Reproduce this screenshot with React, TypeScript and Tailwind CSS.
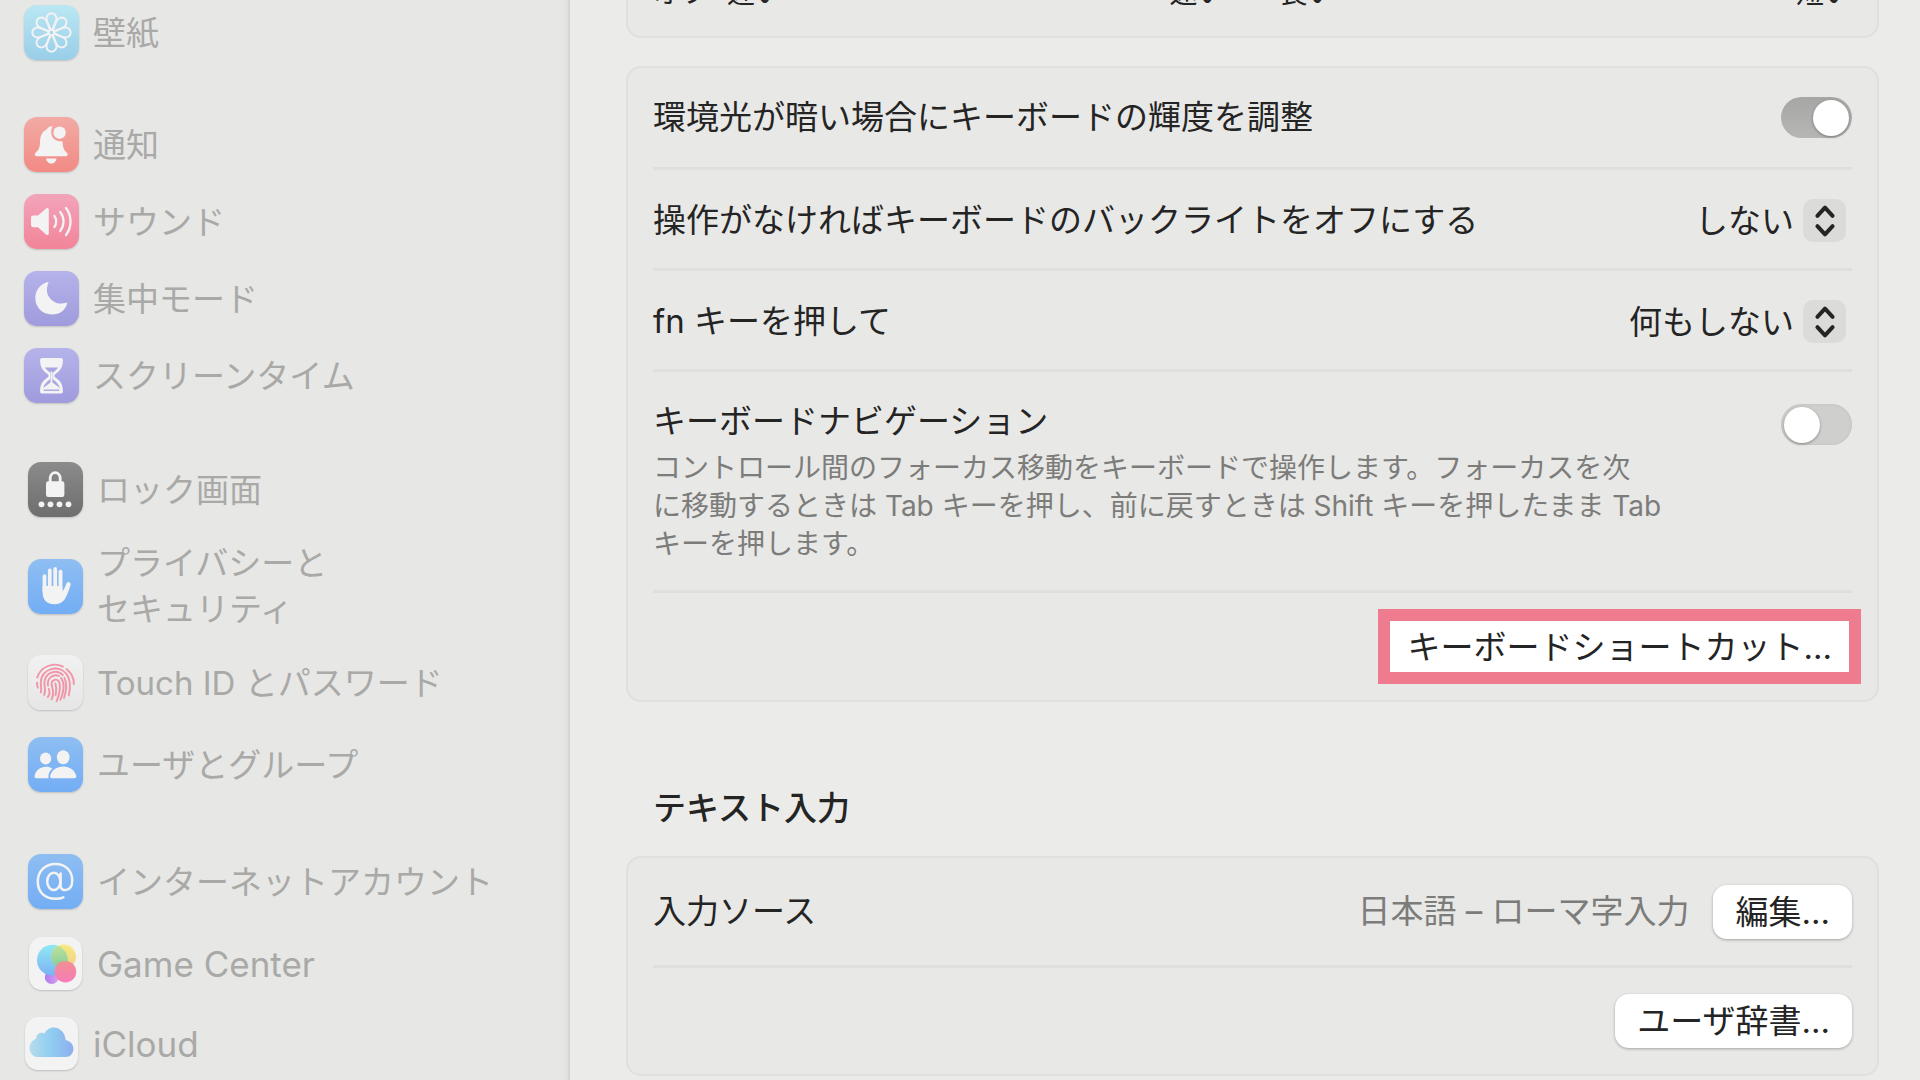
import { useState } from 'react';
import type { ReactNode } from 'react';
import clsx from 'clsx';

const WHITE = '#f3f3f3';

function Glyph({ children }: { children: ReactNode }) {
    return (
        <svg viewBox="0 0 55 55" className="size-full" fill="none" aria-hidden="true">
            {children}
        </svg>
    );
}

function WallpaperIcon() {
    return (
        <Glyph>
            <g transform="translate(27.5 27.5)" stroke={WHITE} strokeWidth="1.9">
                {[0, 45, 90, 135, 180, 225, 270, 315].map((angle) => (
                    <path
                        key={angle}
                        transform={`rotate(${angle})`}
                        d="M-0.8 -2.5C-1.6 -6 -5 -9.5 -5 -14A5 5.2 0 0 1 5 -14C5 -9.5 1.6 -6 0.8 -2.5"
                    />
                ))}
                <circle r="2.8" />
            </g>
        </Glyph>
    );
}

function BellIcon() {
    return (
        <Glyph>
            <path
                fill={WHITE}
                d="M12.6 39.2C10.4 39.2 10.2 37.2 11.4 36C14.8 32.6 15.8 31 16 25.5C16.3 17.5 18.8 14.4 22.6 12.6C23.8 10.2 25.6 9 28.6 9.2C26.6 12.4 26.6 18 29.4 21.2C31.6 23.8 34.8 24.6 38.4 24C38.8 30.5 39.8 32.8 43 36C44.2 37.2 44 39.2 41.8 39.2Z"
            />
            <circle cx="35.6" cy="15.7" r="6.2" fill={WHITE} />
            <path fill={WHITE} d="M22 41.6H32.6C32 44.8 30 46.8 27.3 46.8C24.6 46.8 22.6 44.8 22 41.6Z" />
        </Glyph>
    );
}

function SpeakerIcon() {
    return (
        <Glyph>
            <path
                fill={WHITE}
                d="M9.5 21.6H14L22 14.6C23.4 13.4 24.8 14 24.8 15.8V39.2C24.8 41 23.4 41.6 22 40.4L14 33.2H9.5C7.8 33.2 7 32.4 7 30.8V24C7 22.4 7.8 21.6 9.5 21.6Z"
            />
            <g stroke={WHITE} strokeWidth="2.3" strokeLinecap="round">
                <path d="M30.4 22C32.8 25 32.8 30 30.4 33" />
                <path d="M36.2 18C40.6 23.5 40.6 31.5 36.2 37" />
                <path d="M42 14C48 22 48 33 42 41" />
            </g>
        </Glyph>
    );
}

function MoonIcon() {
    return (
        <Glyph>
            <path
                fill={WHITE}
                d="M23.8 11C15.4 13.2 11.3 20 11.3 27C11.3 36.5 18.4 43.4 28 43.4C35.4 43.4 41 39.6 43.2 32.4C43.4 31.7 42.8 31.4 42.2 31.7C37 33.4 31.4 32.6 27 28.4C22.4 23.8 22 18 24.4 11.8C24.6 11.2 24.4 10.8 23.8 11Z"
            />
        </Glyph>
    );
}

function HourglassIcon() {
    return (
        <Glyph>
            <path
                fill={WHITE}
                d="M18 10H37C38.3 10 38.9 10.8 38.9 12C38.9 20 36 22.6 31 26.4C30.2 27.2 30.2 28.2 31 29C36 32.8 38.9 35.4 38.9 43.4C38.9 44.6 38.3 45.4 37 45.4H18C16.7 45.4 16.1 44.6 16.1 43.4C16.1 35.4 19 32.8 24 29C24.8 28.2 24.8 27.2 24 26.4C19 22.6 16.1 20 16.1 12C16.1 10.8 16.7 10 18 10Z"
            />
            <path
                fill="#a9a6e2"
                d="M21 19.4H34C32.8 21.4 31 22.8 28.6 25V31C32.8 34.4 35 36.4 35.8 40L28.6 34.6C28 34.2 27 34.2 26.4 34.6L19.2 40C20 36.4 22.2 34.4 26.4 31V25C24 22.8 22.2 21.4 21 19.4Z"
            />
            <path stroke={WHITE} strokeWidth="1.8" d="M27.5 23.6V36" />
            <path stroke="#a9a6e2" strokeWidth="1.4" d="M19.8 42.2H35.2" />
        </Glyph>
    );
}

function LockIcon() {
    return (
        <Glyph>
            <rect x="18" y="19.3" width="18.4" height="15.8" rx="2.4" fill={WHITE} />
            <path stroke={WHITE} strokeWidth="2.8" d="M22.2 20V16.6C22.2 8.6 32.2 8.6 32.2 16.6V20" />
            {[13.5, 22.5, 31.5, 40.5].map((cx) => (
                <circle key={cx} cx={cx} cy="42.3" r="2.9" fill={WHITE} />
            ))}
        </Glyph>
    );
}

function HandIcon() {
    return (
        <Glyph>
            <g stroke={WHITE} strokeWidth="3.8" strokeLinecap="round">
                <path d="M16.5 17.2V32" />
                <path d="M21.8 11.4V32" />
                <path d="M27.2 10V32" />
                <path d="M32.5 12.6V32" />
            </g>
            <path
                fill={WHITE}
                d="M14.6 27H34.4V32.4C35.4 31.8 36.4 29.6 38 25.4C38.8 23.2 40 22.8 41.2 23.2C42.6 23.6 42.9 25 42.4 26.6C41.2 30.6 39.8 34.4 37.6 38.8C35.4 43 32 45.2 26.8 45.2C19 45.2 14.6 41 14.6 33.4Z"
            />
        </Glyph>
    );
}

function FingerprintIcon() {
    return (
        <Glyph>
            <g stroke="#f295a7" strokeWidth="1.9" strokeLinecap="round">
                <path d="M9.2 22.6C12.4 12 24.5 6.6 35 11.6" />
                <path d="M38.4 14C43.4 18 46 24 45.8 29" />
                <path d="M9 27.6C9 29.6 9.2 31 9.8 32.6" />
                <path d="M12.8 37.4C14 34.6 12.6 31.4 12.8 27.4C13.2 13.4 31.4 8.6 38.8 19.4C42.8 25.2 42.4 33 40.8 40.4" />
                <path d="M16.2 39.8C18.2 36 16.4 32.4 16.4 28C16.6 17.6 28.6 13.4 34.8 20.2" />
                <path d="M36.4 22.8C39.6 29.4 38 37 36 43" />
                <path d="M19.8 42C21.8 39.6 22 37 20.8 34" />
                <path d="M20 30.6C18.6 23.2 25.4 18.4 31 21" />
                <path d="M33 23C37 28 35.4 37.4 32.4 44.8" />
                <path d="M23.6 44.2C26.4 40 25.2 35.4 23.8 30.6C22.4 24.4 29.8 22.6 31.4 27.6C32.8 33.8 31 40.4 28.6 46.2" />
                <path d="M27.4 28.4C29.2 34 28.2 36.6 27.6 40" />
            </g>
        </Glyph>
    );
}

function UsersIcon() {
    return (
        <Glyph>
            <g fill={WHITE}>
                <ellipse cx="17.6" cy="21.6" rx="5.6" ry="6" />
                <ellipse cx="35.2" cy="20.2" rx="6.3" ry="7" />
                <path d="M8.2 41.2C6.8 41.2 6.4 40.2 6.6 39C7.6 33.4 12.4 29.8 17.8 29.8C20.4 29.8 22.6 30.4 24.4 31.6C22 33.6 20.4 36.6 20.4 39.4C20.4 40 20.6 40.8 20.8 41.2Z" />
                <path d="M24 41.2C22.4 41.2 21.8 40.2 22.2 38.8C23.6 33.2 29 29.6 35.2 29.6C41.6 29.6 46.8 33.2 48.2 38.8C48.6 40.2 48 41.2 46.4 41.2Z" />
            </g>
        </Glyph>
    );
}

function AtIcon() {
    return (
        <Glyph>
            <g stroke={WHITE} strokeWidth="2.5" strokeLinecap="round">
                <ellipse cx="25.8" cy="27.4" rx="6.6" ry="8.6" />
                <path d="M32.6 19.4V32C32.6 38.2 44.2 38 44.2 26.4C44.2 16.4 37 10 27.6 10C17 10 9.8 17.2 9.8 27.6C9.8 38.2 16.6 44.8 27.6 44.8C30.6 44.8 33.2 44.4 35.4 43.4" />
            </g>
        </Glyph>
    );
}

function GameCenterIcon() {
    return (
        <Glyph>
            <defs>
                <linearGradient id="gc-blue" x1="0" y1="0" x2="0" y2="1">
                    <stop offset="0" stopColor="#8fe9f2" />
                    <stop offset="1" stopColor="#7cb2f4" />
                </linearGradient>
                <linearGradient id="gc-yellow" x1="0" y1="0" x2="0" y2="1">
                    <stop offset="0" stopColor="#f6ea80" />
                    <stop offset="1" stopColor="#f0cf8c" />
                </linearGradient>
                <linearGradient id="gc-green" x1="0" y1="0" x2="0" y2="1">
                    <stop offset="0" stopColor="#c3e298" />
                    <stop offset="1" stopColor="#7ecb9c" />
                </linearGradient>
                <linearGradient id="gc-pink" x1="0" y1="0" x2="0" y2="1">
                    <stop offset="0" stopColor="#f09090" />
                    <stop offset="1" stopColor="#f77cb8" />
                </linearGradient>
                <linearGradient id="gc-purple" x1="0" y1="0" x2="1" y2="0">
                    <stop offset="0" stopColor="#ab7cf3" />
                    <stop offset="1" stopColor="#dc9cec" />
                </linearGradient>
                <clipPath id="gc-clip">
                    <circle cx="24.3" cy="24" r="16" />
                </clipPath>
            </defs>
            <circle cx="23.6" cy="41.6" r="7.2" fill="url(#gc-purple)" />
            <circle cx="24.3" cy="24" r="16" fill="url(#gc-blue)" />
            <circle cx="36" cy="20.6" r="12.8" fill="url(#gc-yellow)" />
            <circle cx="36" cy="20.6" r="12.8" fill="url(#gc-green)" clipPath="url(#gc-clip)" />
            <circle cx="37.8" cy="36" r="11.2" fill="url(#gc-pink)" />
        </Glyph>
    );
}

function CloudIcon() {
    return (
        <Glyph>
            <defs>
                <linearGradient id="cloud" x1="0" y1="0" x2="1" y2="0">
                    <stop offset="0" stopColor="#b5dcec" />
                    <stop offset="0.5" stopColor="#8fcdf0" />
                    <stop offset="1" stopColor="#8eaeee" />
                </linearGradient>
            </defs>
            <path
                fill="url(#cloud)"
                d="M12.9 41.6C8.1 41.2 4.8 37.2 4.8 32.4C4.8 27.6 7.5 24 11.5 22.6C11.5 17.8 15.8 15.2 20.2 17C22.4 12.6 26.2 10.8 30 10.8C36.6 10.8 41.8 16.6 42.2 24.2C46.8 24.8 50.2 28.4 50.2 33C50.2 37.8 46.8 41.6 42.2 41.6Z"
            />
        </Glyph>
    );
}

const blue = 'bg-linear-to-b from-[#8ebef2] to-[#73adf4]';
const purple = 'bg-linear-to-b from-[#b5b3ea] to-[#9f9bdd]';

const groups = [
    {
        className: 'pl-[24px] gap-[22px]',
        items: [
            {
                label: '壁紙',
                icon: <WallpaperIcon />,
                tile: 'size-[55px] bg-linear-to-b from-[#bae7f2] to-[#99cee9]',
            },
        ],
    },
    {
        className: 'mt-[57px] pl-[24px] gap-[22px]',
        items: [
            {
                label: '通知',
                icon: <BellIcon />,
                tile: 'size-[55px] bg-linear-to-b from-[#f2aaa5] to-[#f28a84]',
            },
            {
                label: 'サウンド',
                icon: <SpeakerIcon />,
                tile: 'size-[55px] bg-linear-to-b from-[#f2a4b9] to-[#f28499]',
            },
            { label: '集中モード', icon: <MoonIcon />, tile: clsx('size-[55px]', purple) },
            { label: 'スクリーンタイム', icon: <HourglassIcon />, tile: clsx('size-[55px]', purple) },
        ],
    },
    {
        className: 'mt-[59px] pl-[28px] gap-[23px]',
        items: [
            {
                label: 'ロック画面',
                icon: <LockIcon />,
                tile: 'size-[55px] bg-linear-to-b from-[#8b8b8b] to-[#6e6e6e]',
            },
            { label: 'プライバシーと\nセキュリティ', icon: <HandIcon />, tile: clsx('size-[55px]', blue) },
            {
                label: 'Touch ID とパスワード',
                icon: <FingerprintIcon />,
                tile: 'size-[55px] bg-linear-to-b from-[#f1f1f1] to-[#e6e6e6]',
            },
        ],
    },
    {
        className: 'mt-[27px] pl-[28px] gap-[27px]',
        items: [{ label: 'ユーザとグループ', icon: <UsersIcon />, tile: clsx('size-[55px]', blue) }],
    },
    {
        className: 'mt-[62px] pl-[28px] gap-[27px]',
        items: [
            { label: 'インターネットアカウント', icon: <AtIcon />, tile: clsx('size-[55px]', blue) },
            {
                label: 'Game Center',
                icon: <GameCenterIcon />,
                tile: 'size-[53px] bg-[#f3f3f3]',
                latin: true,
            },
        ],
    },
    {
        className: 'mt-[25px] pl-[24px] gap-[27px]',
        items: [{ label: 'iCloud', icon: <CloudIcon />, tile: 'size-[53px] bg-[#f3f3f3]', latin: true }],
    },
];

function Sidebar() {
    return (
        <nav className="w-[570px] shrink-0 border-r-2 border-[#d6d6d4] bg-[#e7e7e5] pt-[5px] text-[#a9a9a7] shadow-[inset_-5px_0_5px_-4px_#dadad8]">
            {groups.map((group, index) => (
                <ul key={index} className={clsx('flex flex-col', group.className)}>
                    {group.items.map((item) => (
                        <li key={item.label}>
                            <a href="#" className="flex min-h-[55px] items-center gap-[14px]">
                                <span className="flex w-[55px] shrink-0 justify-center">
                                    <span
                                        className={clsx(
                                            'flex items-center justify-center rounded-[13px] shadow-[0_1px_2px_rgba(0,0,0,0.18)]',
                                            item.tile,
                                        )}
                                    >
                                        {item.icon}
                                    </span>
                                </span>
                                <span
                                    className={clsx(
                                        'leading-[46px] whitespace-pre-line',
                                        'latin' in item && 'text-[35px]',
                                    )}
                                >
                                    {item.label}
                                </span>
                            </a>
                        </li>
                    ))}
                </ul>
            ))}
        </nav>
    );
}

function Card({ children }: { children: ReactNode }) {
    return (
        <div className="rounded-[15px] border-2 border-[#dfdfdd] bg-[#e8e8e6] px-[25px]">{children}</div>
    );
}

function Toggle({ id, defaultChecked }: { id: string; defaultChecked: boolean }) {
    const [on, setOn] = useState(defaultChecked);

    return (
        <input
            id={id}
            type="checkbox"
            role="switch"
            checked={on}
            onChange={(e) => setOn(e.target.checked)}
            className={clsx(
                'flex h-[41px] w-[71px] shrink-0 appearance-none items-center rounded-full px-[3px]',
                'before:size-[36px] before:rounded-full before:bg-white before:shadow-[0_1px_3px_rgba(0,0,0,0.35)]',
                on
                    ? 'justify-end bg-linear-to-b from-[#a6a6a5] to-[#b6b6b5]'
                    : 'bg-[#cfcfcd] shadow-[inset_0_0_3px_#bdbdbb]',
            )}
        />
    );
}

function PopUp({ id, value }: { id: string; value: string }) {
    return (
        <span className="relative mr-[6px] flex items-center">
            <select id={id} className="h-[48px] appearance-none bg-transparent pr-[52px] text-right leading-[48px]">
                <option>{value}</option>
            </select>
            <span className="pointer-events-none absolute right-0 flex size-[43px] items-center justify-center rounded-[10px] bg-[#dbdbd9]">
                <svg width="24" height="34" viewBox="0 0 24 34" fill="none" aria-hidden="true">
                    <path
                        d="M4.4 11.8L12 3.6L19.6 11.8M4.4 22.2L12 30.4L19.6 22.2"
                        stroke="#242424"
                        strokeWidth="4"
                        strokeLinecap="round"
                        strokeLinejoin="round"
                    />
                </svg>
            </span>
        </span>
    );
}

function PushButton({ children }: { children: ReactNode }) {
    return (
        <button
            type="button"
            className="h-[54px] rounded-[14px] bg-white px-[22px] leading-[48px] shadow-[0_1px_3px_rgba(0,0,0,0.3)]"
        >
            {children}
        </button>
    );
}

export default function App() {
    return (
        <div
            lang="ja"
            className="flex h-screen overflow-hidden bg-[#ebebe9] font-[Inter,'Noto_Sans_CJK_JP',sans-serif] text-[33px] text-[#242424]"
        >
            <Sidebar />

            {/* Scrolled a little way down, so the slider labels are cut by the window edge */}
            <main className="-mt-8 min-w-0 flex-1 pr-[41px] pl-[56px]">
                <Card>
                    <div className="grid h-[66px] grid-cols-2 gap-[54px] text-[28px] leading-[46px]">
                        <div className="flex gap-[18px]">
                            <span>オフ</span>
                            <span className="flex-1">遅い</span>
                            <span>速い</span>
                        </div>
                        <div className="flex justify-between">
                            <span>長い</span>
                            <span>短い</span>
                        </div>
                    </div>
                </Card>

                <div className="mt-[28px]">
                    <Card>
                        <div className="flex h-[102px] items-center justify-between border-b-[3px] border-[#dfdfdd]">
                            <label htmlFor="ambient">環境光が暗い場合にキーボードの輝度を調整</label>
                            <Toggle id="ambient" defaultChecked />
                        </div>
                        <div className="flex h-[101px] items-center justify-between border-b-[3px] border-[#dfdfdd] pt-[3px]">
                            <label htmlFor="backlight">操作がなければキーボードのバックライトをオフにする</label>
                            <PopUp id="backlight" value="しない" />
                        </div>
                        <div className="flex h-[101px] items-center justify-between border-b-[3px] border-[#dfdfdd] pt-[3px]">
                            <label htmlFor="fn-key">fn キーを押して</label>
                            <PopUp id="fn-key" value="何もしない" />
                        </div>
                        <div className="flex items-start justify-between border-b-[3px] border-[#dfdfdd] pt-[25px] pb-[27px]">
                            <div>
                                <label htmlFor="navigation" className="block leading-[48px]">
                                    キーボードナビゲーション
                                </label>
                                <p className="mt-[4px] text-[28px] leading-[38px] text-[#7c7c7a]">
                                    コントロール間のフォーカス移動をキーボードで操作します。フォーカスを次
                                    <br />
                                    に移動するときは Tab キーを押し、前に戻すときは Shift キーを押したまま Tab
                                    <br />
                                    キーを押します。
                                </p>
                            </div>
                            <div className="pt-[7px]">
                                <Toggle id="navigation" defaultChecked={false} />
                            </div>
                        </div>
                        <div className="-mr-[9px] flex h-[107px] items-center justify-end">
                            <button
                                type="button"
                                className="h-[75px] border-12 border-[#ef7b8f] bg-white px-[17px] leading-[48px]"
                            >
                                キーボードショートカット…
                            </button>
                        </div>
                    </Card>
                </div>

                <h2 className="mt-[82px] mb-[24px] pl-[27px] leading-[48px] font-medium">テキスト入力</h2>

                <Card>
                    <div className="flex h-[110px] items-center border-b-[3px] border-[#dfdfdd]">
                        <span className="flex-1">入力ソース</span>
                        <span className="mr-[24px] text-[#7c7c7a]">日本語 – ローマ字入力</span>
                        <PushButton>編集…</PushButton>
                    </div>
                    <div className="flex h-[106px] items-center justify-end">
                        <PushButton>ユーザ辞書…</PushButton>
                    </div>
                </Card>
            </main>
        </div>
    );
}
